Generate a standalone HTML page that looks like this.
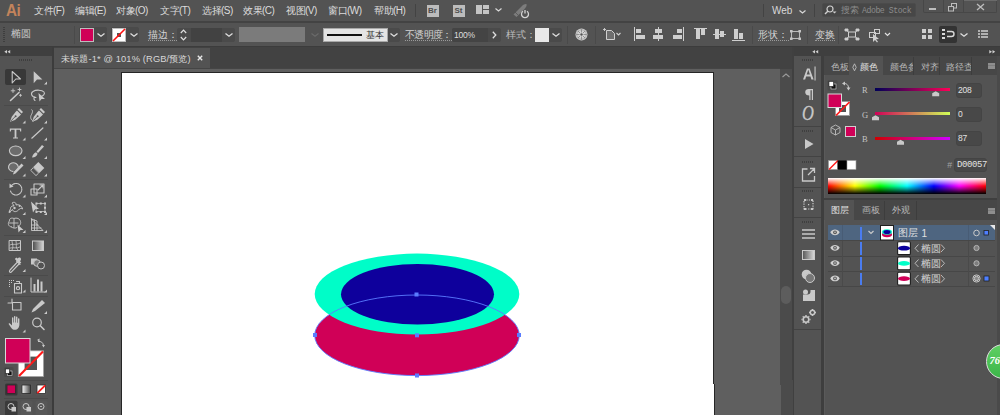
<!DOCTYPE html>
<html><head><meta charset="utf-8">
<style>
*{margin:0;padding:0;box-sizing:border-box}
html,body{width:1000px;height:415px;overflow:hidden}
body{background:#535353;position:relative;font-family:"Liberation Sans",sans-serif;color:#d9d9d9}
.a{position:absolute}
.t{position:absolute;white-space:nowrap;line-height:1}
svg{position:absolute;overflow:visible}
.mn{font-size:10px;top:6px;color:#dcdcdc;letter-spacing:-0.5px}
.cb{font-size:10px;color:#d4d4d4}
.ul{border-bottom:1px dotted #9a9a9a}
.sep{position:absolute;width:1px;background:#434343}
.grip{position:absolute;height:2px;background:repeating-linear-gradient(90deg,#3e3e3e 0 1px,transparent 1px 2px)}
</style></head><body>

<!-- ===== MENU BAR ===== -->
<div class="a" style="left:0;top:0;width:1000px;height:22px;background:#535353"></div>
<div class="a" style="left:0;top:21px;width:1000px;height:2px;background:#434343"></div>
<div class="t" style="left:6px;top:2.5px;font-size:16px;font-weight:bold;color:#c2835b;letter-spacing:-0.6px;transform:scaleX(0.95);transform-origin:left">Ai</div>
<div class="t mn" style="left:34px">文件(F)</div>
<div class="t mn" style="left:75px">编辑(E)</div>
<div class="t mn" style="left:116px">对象(O)</div>
<div class="t mn" style="left:160px">文字(T)</div>
<div class="t mn" style="left:202px">选择(S)</div>
<div class="t mn" style="left:243px">效果(C)</div>
<div class="t mn" style="left:286px">视图(V)</div>
<div class="t mn" style="left:328px">窗口(W)</div>
<div class="t mn" style="left:374px">帮助(H)</div>
<div class="sep" style="left:415px;top:4px;height:13px"></div>

<div class="a" style="left:427px;top:5px;width:12px;height:12px;background:#bcbcbc"></div>
<div class="t" style="left:428px;top:7px;font-size:8px;font-weight:bold;color:#4e4e4e">Br</div>
<div class="a" style="left:453px;top:5px;width:12px;height:12px;background:#bcbcbc"></div>
<div class="t" style="left:454.5px;top:7px;font-size:8px;font-weight:bold;color:#4e4e4e">St</div>
<div class="a" style="left:476px;top:5px;width:6px;height:9px;background:#c4c4c4"></div>
<div class="a" style="left:483px;top:5px;width:6px;height:4px;background:#c4c4c4"></div>
<div class="a" style="left:483px;top:10px;width:6px;height:4px;background:#c4c4c4"></div>
<svg style="left:495px;top:8px" width="7" height="4"><path d="M0.5 0.5L3.5 3L6.5 0.5" stroke="#d8d8d8" stroke-width="1.2" fill="none"/></svg>
<svg style="left:512px;top:3px" width="18" height="16"><path d="M1.5 11.5L9.5 3.5C11.5 1.5 13.5 0.8 14.5 1.2C15 2.2 14.2 4.3 12.3 6.2L4.5 14Z" fill="#7c7c7c"/><path d="M3 9L6 12" stroke="#535353" stroke-width="0.8"/><path d="M11 8.3A3.5 3.5 0 1 0 15 8.3" stroke="#d4d4d4" stroke-width="1.3" fill="none"/><path d="M13 7V10.5" stroke="#d4d4d4" stroke-width="1.3"/></svg>

<div class="sep" style="left:763px;top:4px;height:13px"></div>
<div class="t" style="left:772px;top:6px;font-size:10px;color:#d8d8d8">Web</div>
<svg style="left:799px;top:10px" width="7" height="4"><path d="M0.5 0.5L3.5 3L6.5 0.5" stroke="#d8d8d8" stroke-width="1.2" fill="none"/></svg>
<div class="sep" style="left:814px;top:4px;height:13px"></div>
<div class="a" style="left:822px;top:3px;width:94px;height:14px;background:#474747;border-radius:2px;border:1px solid #4b4b4b"></div>
<svg style="left:824px;top:5px" width="14" height="10"><circle cx="6" cy="4" r="3" stroke="#cfcfcf" stroke-width="1.2" fill="none"/><path d="M4 6L1 9" stroke="#cfcfcf" stroke-width="1.4"/><path d="M8.5 6.5h4l-2 2z" fill="#cfcfcf"/></svg>
<div class="t" style="left:841px;top:5.5px;font-size:8.5px;color:#8c8c8c">搜索</div><div class="t" style="left:862px;top:6.5px;font-size:8.2px;color:#8c8c8c;font-family:'Liberation Mono',monospace;letter-spacing:-0.45px">Adobe Stock</div>

<div class="a" style="left:923px;top:0;width:74px;height:13px;border:1px solid #474747;border-top:none;border-radius:0 0 2px 2px;background:#535353"></div>
<div class="a" style="left:943px;top:0;width:1px;height:13px;background:#474747"></div>
<div class="a" style="left:963px;top:0;width:1px;height:13px;background:#474747"></div>
<div class="a" style="left:964px;top:0;width:33px;height:1px;background:#6a6a6a"></div>
<div class="a" style="left:929px;top:8px;width:7px;height:2px;background:#bdbdbd"></div>
<svg style="left:948px;top:3px" width="10" height="9"><rect x="3.5" y="0.5" width="5" height="4.5" stroke="#bdbdbd" fill="none"/><rect x="0.5" y="3.5" width="5" height="4.5" stroke="#bdbdbd" fill="#535353"/></svg>
<svg style="left:976px;top:3px" width="9" height="8"><path d="M1 1L8 7M8 1L1 7" stroke="#bdbdbd" stroke-width="1.3"/></svg>

<!-- ===== CONTROL BAR ===== -->
<div class="a" style="left:0;top:46px;width:1000px;height:1px;background:#3c3c3c"></div>
<div class="grip" style="left:3px;top:27px;width:2px;height:16px;background:repeating-linear-gradient(180deg,#3e3e3e 0 1px,transparent 1px 2px)"></div>
<div class="t cb" style="left:11px;top:29px;color:#c8c8c8;font-size:9.5px">椭圆</div>
<div class="sep" style="left:74px;top:26px;height:18px;background:#4a4a4a"></div>


<!-- fill/stroke widgets -->
<div class="a" style="left:79px;top:27px;width:28px;height:15px;background:#4a4a4a;border-radius:2px"></div>
<div class="a" style="left:80px;top:28px;width:14px;height:14px;background:#d00057;border:1px solid #bdbdbd"></div>
<svg style="left:97px;top:33px" width="8" height="4"><path d="M0.5 0.5L4 3.2L7.5 0.5" stroke="#e0e0e0" stroke-width="1.3" fill="none"/></svg>
<div class="a" style="left:111px;top:27px;width:28px;height:15px;background:#4a4a4a;border-radius:2px"></div>
<div class="a" style="left:112px;top:28px;width:14px;height:14px;background:#fff;border:1px solid #bdbdbd"></div>
<div class="a" style="left:117px;top:33px;width:4px;height:4px;background:#555"></div>
<svg style="left:112px;top:28px" width="14" height="14"><path d="M1 13L13 1" stroke="#ff1010" stroke-width="1.6"/></svg>
<svg style="left:130px;top:33px" width="8" height="4"><path d="M0.5 0.5L4 3.2L7.5 0.5" stroke="#e0e0e0" stroke-width="1.3" fill="none"/></svg>

<div class="t cb ul" style="left:148px;top:30px;letter-spacing:0.2px">描边：</div>
<div class="a" style="left:177px;top:28px;width:58px;height:14px;background:#4a4a4a;border-radius:2px"></div>
<div class="a" style="left:191px;top:28px;width:31px;height:14px;background:#424242"></div>
<svg style="left:180px;top:29px" width="7" height="12"><path d="M0.8 4L3.5 1.2L6.2 4M0.8 8L3.5 10.8L6.2 8" stroke="#e0e0e0" stroke-width="1.2" fill="none"/></svg>
<svg style="left:225px;top:33px" width="8" height="4"><path d="M0.5 0.5L4 3.2L7.5 0.5" stroke="#e0e0e0" stroke-width="1.3" fill="none"/></svg>
<div class="a" style="left:239px;top:27px;width:66px;height:15px;background:#7b7b7b"></div>
<svg style="left:311px;top:33px" width="8" height="4"><path d="M0.5 0.5L4 3.2L7.5 0.5" stroke="#6a6a6a" stroke-width="1.2" fill="none"/></svg>

<div class="a" style="left:323px;top:28px;width:65px;height:14px;background:#e4e4e4;border:1px solid #a8a8a8"></div>
<div class="a" style="left:327px;top:34px;width:35px;height:2px;background:#111"></div>
<div class="t" style="left:366px;top:30.5px;font-size:9px;color:#333;letter-spacing:0.3px">基本</div>
<div class="a" style="left:388px;top:28px;width:12px;height:14px;background:#4a4a4a;border-radius:0 2px 2px 0"></div>
<svg style="left:390px;top:33px" width="8" height="4"><path d="M0.5 0.5L4 3.2L7.5 0.5" stroke="#e0e0e0" stroke-width="1.3" fill="none"/></svg>

<div class="t cb ul" style="left:405px;top:30px;letter-spacing:-0.7px">不透明度：</div>
<div class="a" style="left:452px;top:28px;width:49px;height:14px;background:#4a4a4a;border-radius:2px"></div>
<div class="a" style="left:452px;top:28px;width:36px;height:14px;background:#444;border-radius:2px 0 0 2px"></div>
<div class="t" style="left:454px;top:30.5px;font-size:8.5px;color:#dedede;letter-spacing:-0.2px">100%</div>
<svg style="left:492px;top:31px" width="5" height="8"><path d="M0.8 0.8L3.8 4L0.8 7.2" stroke="#e0e0e0" stroke-width="1.3" fill="none"/></svg>

<div class="t cb" style="left:506px;top:30px;letter-spacing:0.2px;color:#bdbdbd">样式：</div>
<div class="a" style="left:535px;top:28px;width:27px;height:14px;background:#4a4a4a;border-radius:2px"></div>
<div class="a" style="left:535px;top:28px;width:14px;height:14px;background:#e8e8e8"></div>
<svg style="left:552px;top:33px" width="8" height="4"><path d="M0.5 0.5L4 3.2L7.5 0.5" stroke="#e0e0e0" stroke-width="1.3" fill="none"/></svg>
<div class="sep" style="left:567px;top:26px;height:18px;background:#4a4a4a"></div>
<svg style="left:575px;top:28px" width="13" height="13"><circle cx="6.5" cy="6.5" r="6" fill="#d4d4d4"/><circle cx="6.5" cy="6.5" r="4.8" fill="none" stroke="#9a9a9a" stroke-width="0.7"/><path d="M6.5 1.2V4.5M6.5 8.5V11.8M1.2 6.5H4.5M8.5 6.5H11.8M2.8 2.8L5 5M8 8L10.2 10.2M10.2 2.8L8 5M5 8L2.8 10.2" stroke="#8a8a8a" stroke-width="0.9"/><circle cx="6.5" cy="6.5" r="1.2" fill="#555"/></svg>
<div class="sep" style="left:595px;top:26px;height:18px;background:#4a4a4a"></div>
<svg style="left:600px;top:26px" width="22" height="14"><path d="M6.5 4.5H11.5L14.5 7.5V13.5H6.5Z" stroke="#d0d0d0" stroke-width="1" fill="#6e6e6e"/><path d="M3 3.5H6M4.5 2V5" stroke="#d0d0d0" stroke-width="0.9"/><path d="M16.5 7L18.5 9L20.5 7" stroke="#d0d0d0" stroke-width="1.1" fill="none"/></svg>

<!-- align icons -->
<div class="a" style="left:634px;top:27px;width:1px;height:14px;background:#cfcfcf"></div>
<div class="a" style="left:636px;top:29px;width:5px;height:4px;background:#cfcfcf"></div>
<div class="a" style="left:636px;top:35px;width:9px;height:4px;background:#cfcfcf"></div>
<div class="a" style="left:658px;top:27px;width:1px;height:14px;background:#cfcfcf"></div>
<div class="a" style="left:655px;top:29px;width:7px;height:4px;background:#cfcfcf"></div>
<div class="a" style="left:653px;top:35px;width:10px;height:4px;background:#cfcfcf"></div>
<div class="a" style="left:683px;top:27px;width:1px;height:14px;background:#cfcfcf"></div>
<div class="a" style="left:677px;top:29px;width:5px;height:4px;background:#cfcfcf"></div>
<div class="a" style="left:673px;top:35px;width:9px;height:4px;background:#cfcfcf"></div>
<div class="a" style="left:694px;top:28px;width:13px;height:1px;background:#cfcfcf"></div>
<div class="a" style="left:696px;top:29px;width:4px;height:10px;background:#cfcfcf"></div>
<div class="a" style="left:701px;top:29px;width:4px;height:6px;background:#cfcfcf"></div>
<div class="a" style="left:713px;top:34px;width:13px;height:1px;background:#cfcfcf"></div>
<div class="a" style="left:715px;top:29px;width:4px;height:10px;background:#cfcfcf"></div>
<div class="a" style="left:720px;top:31px;width:4px;height:6px;background:#cfcfcf"></div>
<div class="a" style="left:732px;top:40px;width:13px;height:1px;background:#cfcfcf"></div>
<div class="a" style="left:734px;top:29px;width:4px;height:10px;background:#cfcfcf"></div>
<div class="a" style="left:739px;top:33px;width:4px;height:6px;background:#cfcfcf"></div>
<div class="sep" style="left:752px;top:26px;height:18px;background:#4a4a4a"></div>

<div class="t cb ul" style="left:758px;top:30px;letter-spacing:0.2px">形状：</div>
<svg style="left:790px;top:30px" width="11" height="10"><rect x="1.5" y="1.5" width="8" height="7" stroke="#c4c4c4" stroke-width="0.9" fill="none"/><path d="M0 0h2.6v2.6h-2.6zM8.4 0h2.6v2.6h-2.6zM0 7.4h2.6v2.6h-2.6zM8.4 7.4h2.6v2.6h-2.6z" fill="#c4c4c4"/></svg>
<div class="sep" style="left:807px;top:26px;height:18px;background:#4a4a4a"></div>
<div class="t cb ul" style="left:815px;top:30px">变换</div>
<div class="sep" style="left:838px;top:26px;height:18px;background:#4a4a4a"></div>
<svg style="left:845px;top:29px" width="14" height="11"><rect x="3.5" y="3" width="7" height="5" stroke="#cfcfcf" stroke-width="1" fill="none"/><path d="M0 0h3v2h-3zM11 0h3v2h-3zM0 9h3v2h-3zM11 9h3v2h-3zM1 1L4 3.5M13 1L10 3.5M1 10L4 7.5M13 10L10 7.5" fill="#cfcfcf" stroke="#cfcfcf" stroke-width="0.9"/></svg>
<svg style="left:867px;top:28px" width="26" height="14"><rect x="2.5" y="4.5" width="6" height="5" stroke="#cfcfcf" stroke-width="1" fill="none"/><rect x="7.5" y="1.5" width="5" height="4" stroke="#cfcfcf" stroke-width="1" fill="none"/><path d="M6 6L6 14L8 12L10 14.5L11 13.8L9 11.3L12 11Z" fill="#cfcfcf"/><path d="M18 5L20.5 7.5L23 5" stroke="#e0e0e0" stroke-width="1.2" fill="none"/></svg>
<svg style="left:922px;top:29px" width="12" height="12"><path d="M0 0h4v4h-4zM6 0h4v4h-4zM0 6h4v4h-4zM6 6h4v4h-4z" fill="#cfcfcf"/><path d="M5 0V11M0 5H11" stroke="#535353" stroke-width="1"/></svg>
<div class="a" style="left:939px;top:26px;width:18px;height:17px;background:#333;border-radius:2px"></div>
<svg style="left:942px;top:29px" width="12" height="11"><path d="M0 0h3v2h-3zM0 4h3v2h-3zM0 8h3v2h-3z" fill="#d8d8d8"/><path d="M5 2.5H9.5A2.5 2.5 0 0 1 9.5 7.5H5" stroke="#d8d8d8" stroke-width="1.4" fill="none"/></svg>
<svg style="left:960px;top:33px" width="8" height="4"><path d="M0.5 0.5L4 3.2L7.5 0.5" stroke="#e0e0e0" stroke-width="1.3" fill="none"/></svg>
<svg style="left:978px;top:30px" width="10" height="9"><path d="M0 1h2M3 1h7M0 4h2M3 4h7M0 7h2M3 7h7" stroke="#cfcfcf" stroke-width="1.3"/></svg>


<!-- ===== LEFT TOOLBAR ===== -->
<div class="a" style="left:0;top:47px;width:52px;height:9px;background:#3f3f3f"></div>
<svg style="left:4px;top:50px" width="7" height="4"><path d="M3 0L0.3 1.8L3 3.6ZM6.2 0L3.5 1.8L6.2 3.6Z" fill="#cfcfcf"/></svg>
<div class="a" style="left:52px;top:47px;width:2px;height:368px;background:#3c3c3c"></div>
<div class="grip" style="left:19px;top:59px;width:14px"></div>
<div class="a" style="left:5px;top:69px;width:21px;height:16px;background:#383838;border-radius:2px"></div>
<svg style="left:0;top:0" width="52" height="415">
<g fill="none" stroke="#c9c9c9" stroke-width="1">
 <path d="M4 105.5H48M4 179.5H48M4 235.5H48M4 275.5H48M4 296.5H48M4 380.5H48M4 398.5H48" stroke="#4a4a4a"/>
</g>
<g fill="#c9c9c9">
 <!-- mini triangles -->
 <path d="M47 81.5V84.5H44Z M25.5 120.5V123.5H22.5Z M47 120.5V123.5H44Z M25.5 137.5V140.5H22.5Z M47 137.5V140.5H44Z M25.5 156V159H22.5Z M47 156V159H44Z M25.5 173.5V176.5H22.5Z M47 173.5V176.5H44Z M25.5 194.5V197.5H22.5Z M47 194.5V197.5H44Z M25.5 212V215H22.5Z M47 212V215H44Z M25.5 230V233H22.5Z M47 230V233H44Z M25.5 269V272H22.5Z M25.5 289.5V292.5H22.5Z M47 289.5V292.5H44Z M47 311V314H44Z M25.5 329.5V332.5H22.5Z"/>
</g>
<g fill="none" stroke="#c9c9c9" stroke-width="1.1" stroke-linejoin="round" stroke-linecap="round">
 <!-- select -->
 <path d="M12.2 71.5L20.5 79H15.8L12.2 83Z"/>
 <!-- magic wand -->
 <path d="M10.5 100.5L19 92.5" stroke-width="1.6"/>
 <path d="M13 89v3.5M11.2 90.8h3.6M19.5 88v3M18 89.5h3M20.5 94.3v2M19.5 95.3h2" stroke-width="0.9"/>
 <!-- lasso -->
 <path d="M36 97.5C31 97 30.5 93 33 91.5C36 89.5 42 89.8 44 92C45.5 94 43 96 40.5 96.5M34.5 97C33.5 98.5 34 100 35 100.5"/>
 <!-- pen -->
 <!-- ellipse -->
 <ellipse cx="15.7" cy="150.8" rx="6.3" ry="4.8" fill="#6c6c6c"/>
 <!-- shaper -->
 <path d="M13 171.5C9.5 171 8 168.5 8.7 166C9.5 163 13.5 162 16 163.5C17.5 164.5 18.3 166 18.3 167" fill="#6c6c6c"/>
 <!-- rotate -->
 <path d="M11.6 185.5A5.8 5.8 0 1 1 10.5 191" stroke-dasharray="1.4 0.8"/>
 <!-- scale -->
 <rect x="34" y="184" width="10" height="9"/><rect x="31" y="189" width="6" height="6"/><path d="M38 190L43 185M40 185H43V188"/>
 <!-- free transform dotted rect -->
 <rect x="36.5" y="203.5" width="8.5" height="8" stroke-width="0.8"/>
 <!-- shape builder -->
 <path d="M11.5 227C8 226.5 7.5 223 9.5 221C9 218.5 11.5 217.5 14 218.5C16.5 217.5 20 218.5 20.5 221.5C21 223 20.5 224.5 19.5 225.5M11.5 227C13 228.5 16 228.5 17 227.5M9.5 223H18M14 219V227.5" stroke-width="0.9"/>
 <!-- perspective grid -->
 <path d="M31.5 219V230.5H43L31.5 219ZM31.5 219L37 221V230.5M31.5 225H38M31.5 228H41M34.5 220V230.5" stroke-width="0.9"/>
 <!-- mesh -->
 <rect x="9.5" y="240.5" width="11" height="10" stroke-width="1"/><path d="M10 245C13 243 15 246 20 243M12 241C12 244 14 246 12 250M16 241C17 245 15 247 18 250M10 248C13 247 17 249 20 247" stroke-width="0.8"/>
 <!-- eyedropper -->
 <path d="M10 270L17 262.5M10 270L9.5 271C9.2 272 10 272.7 11 272.3L18.5 264.5M16.5 261L20 264.5" stroke-width="1.1"/>
 <!-- symbol sprayer -->
 <rect x="14.5" y="283.5" width="7" height="9.5"/><circle cx="18" cy="288.2" r="1.6"/><path d="M16.5 281.5H19.5V283.5"/>
 <!-- graph -->
 <path d="M31 278V292H45" stroke-width="1"/>
 <!-- artboard -->
 <rect x="12.5" y="302.5" width="8.5" height="7.5"/><path d="M8 303H12.5M12 299V302.5"/>
 <!-- zoom -->
 <circle cx="37" cy="322.5" r="4.3" stroke-width="1.2"/><path d="M40.3 325.8L44 329.5" stroke-width="1.6"/>
</g>
<g fill="#c9c9c9">
 <!-- direct select -->
 <path d="M33.7 71.2L42.4 79.4H37L33.7 83.3Z"/>
 <!-- lasso arrow -->
 <path d="M38.5 93L45 99H41.5L39.5 101.5Z"/>
 <!-- pen -->
 <path d="M17 110.5L21 114.5L19.5 116L15 120L10 121.8L11.8 116.8L15.5 112Z"/><path d="M17.5 109.5l1.5-1.5 4 4-1.5 1.5z"/>
 <!-- curvature pen -->
 <path d="M39 110.5L43 114.5L41.5 116L37 120L32 121.8L33.8 116.8L37.5 112Z"/><path d="M39.5 109.5l1.5-1.5 4 4-1.5 1.5z"/>
 <!-- T -->
 <path d="M9.8 128.5H21.2V131.5H20.2L19.8 129.8H16.4V137.4H18V138.5H13V137.4H14.6V129.8H11.2L10.8 131.5H9.8Z"/>
 <!-- brush -->
 <path d="M42 145L44 146.5L38 153L36.5 151.5Z"/><path d="M36 152.2L37.6 153.8C37 156 35 157.5 32 157.5C32.5 155 34 152.8 36 152.2Z"/>
 <!-- shaper pencil -->
 <path d="M21.5 163.5L23.5 165.5L15.5 173.5L13 174.5L13.8 171.8Z"/>
 <!-- eraser -->
 <path d="M38.3 162L44.3 168L39.3 173L33.3 167Z"/><path d="M33.3 167.6L38.7 173L36 175.6L30.7 170.3Z" fill="none" stroke="#c9c9c9" stroke-width="0.9"/>
 <!-- rotate arrow head -->
 <path d="M9.5 183.5L13.5 186.5L9.5 188Z"/>
 <!-- puppet warp -->
 <path d="M12 203C14 201.5 16.5 202.5 16 205C19 204 22 206 22.5 209C21 208 19.5 208.5 18.5 210C16 212.5 13 212 12.5 209.5C11.5 210.5 10 211.5 9 212.5L10.5 208.5C10.5 206.5 12.5 205.5 14 206C13.5 204.5 12.5 204 12 203Z" fill="none" stroke="#c9c9c9" stroke-width="1"/><circle cx="14.5" cy="208" r="1.2"/><circle cx="9.8" cy="211.8" r="1"/><circle cx="19.5" cy="206" r="0.9"/>
 <!-- free transform arrow -->
 <path d="M35.5 202.5h2v2h-2zM44 202.5h2v2h-2zM44 211h2v2h-2zM35.5 211h2v2h-2zM39.8 211h2v2h-2zM44 206.8h2v2h-2zM39.8 202.5h2v2h-2z"/><path d="M31 201.5L39 209H35.3L33 212.5Z"/>
 <!-- shape builder arrow -->
 <path d="M17.5 224.5L23.5 230H20.5L18.5 232.5Z"/>
 <!-- eyedropper bulb -->
 <path d="M17.5 258.5C19 257 21 257.5 21 259.3C21 260.2 20.5 260.8 20 261.3L21.3 262.6L19.8 264L14.8 259L16.3 257.6Z"/>
 <!-- blend -->
 <path d="M31 258.5h6v6h-6z"/>
 <!-- graph bars -->
 <path d="M33.5 284h2v7.5h-2zM37 279.5h2v12h-2zM40.5 281.5h2v10h-2z"/>
 <!-- sprayer dots -->
 <path d="M9 280h1v1h-1zM11 280h1v1h-1zM13 280h1v1h-1zM9 282h1v1h-1zM11 282h1v1h-1zM9 284h1v1h-1zM9 286h1v1h-1z"/>
 <!-- slice knife -->
 <path d="M42 300L45 303L35 311L31.5 312.5L33 309Z"/>
 <!-- hand -->
 <path d="M12 325.5V317.8C12 317 13.4 317 13.4 317.8V322.5H14V316.5C14 315.7 15.4 315.7 15.4 316.5V322.5H16V317C16 316.2 17.4 316.2 17.4 317V322.8H18V318.8C18 318 19.4 318 19.4 318.8V324.5C19.4 327.5 17.5 329.8 14.8 329.8C13 329.8 12 329 11 327.5L8.8 324.3C8.3 323.5 9.3 322.8 10 323.4Z"/>
</g>
<g fill="none" stroke="#c9c9c9" stroke-width="1">
 <circle cx="37" cy="263" r="3.3" fill="#777"/><circle cx="41" cy="265.5" r="3.5" fill="#535353"/>
 <rect x="32.5" y="241" width="11" height="9.5" fill="url(#gr)"/>
</g>
<defs><linearGradient id="gr"><stop offset="0" stop-color="#4a4a4a"/><stop offset="1" stop-color="#d8d8d8"/></linearGradient>
<linearGradient id="gr2"><stop offset="0" stop-color="#fafafa"/><stop offset="1" stop-color="#444"/></linearGradient></defs>
<path d="M31.8 138.2L42.9 128" stroke="#c9c9c9" stroke-width="1.2" stroke-linecap="round"/>
<path d="M10.8 121L15.2 116.6M32.8 121L37.2 116.6" stroke="#535353" stroke-width="0.9"/>
<circle cx="15.6" cy="116.2" r="1" fill="#535353"/><circle cx="37.6" cy="116.2" r="1" fill="#535353"/>
<path d="M31.5 109.5C33.5 111 32 113.5 31 115.5C30 118 31.5 121 34 121" stroke="#c9c9c9" stroke-width="0.9" fill="none"/>
<!-- fill / stroke -->
<rect x="18.3" y="350.8" width="25.2" height="25.8" fill="#fff" stroke="#a0a0a0" stroke-width="0.8"/>
<rect x="24.6" y="356.6" width="12.4" height="13.4" fill="#535353"/>
<path d="M19 376L43 351.5" stroke="#ff1a1a" stroke-width="2.1"/>
<rect x="5.5" y="338.5" width="24.5" height="24.5" fill="#d00057" stroke="#d8d8d8"/>
<path d="M38 341.5C41 341 43 342.5 43.5 345.5" stroke="#c9c9c9" fill="none" stroke-width="1"/><path d="M37 340l2.5-1.5v3z M42 345l3 0-1.5 2.5z" fill="#c9c9c9"/>
<rect x="4" y="367" width="9.5" height="10" rx="1.5" fill="#4b4b4b"/><rect x="7.5" y="371" width="4.5" height="4.5" fill="#111" stroke="#ddd" stroke-width="0.6"/><rect x="5.6" y="369" width="3.8" height="4.3" fill="#fff" stroke="#222" stroke-width="0.6"/>
<rect x="20.5" y="383.5" width="12" height="12" rx="1.5" fill="#575757"/><rect x="35.5" y="383.5" width="12" height="12" rx="1.5" fill="#575757"/><rect x="5" y="383.5" width="12.5" height="12" rx="1.5" fill="#3a3a3a"/><rect x="7" y="385" width="8.5" height="8.5" fill="#d00057" stroke="#2a2a2a" stroke-width="0.8"/>
<rect x="22" y="385" width="8.5" height="8.5" fill="url(#gr2)" stroke="#2a2a2a" stroke-width="0.8"/>
<rect x="37" y="385" width="8.5" height="8.5" fill="#fff" stroke="#2a2a2a" stroke-width="0.8"/><path d="M37.3 393.2L45.2 385.3" stroke="#ff1a1a" stroke-width="1.8"/>
<!-- draw modes -->
<rect x="5" y="400.7" width="12.5" height="16" rx="1.5" fill="#3a3a3a"/>
<rect x="20.5" y="400.7" width="12" height="16" rx="1.5" fill="#575757"/><rect x="35.5" y="400.7" width="12" height="16" rx="1.5" fill="#575757"/>
<g fill="none" stroke="#c9c9c9" stroke-width="1">
<circle cx="11" cy="406.5" r="3"/><circle cx="26" cy="406.5" r="3"/><circle cx="41" cy="406.5" r="3"/><path d="M40 406.5h2" stroke-width="0.8"/>
</g>
<path d="M11.5 407h4.5v4.5h-4.5zM26.5 407h4.5v4.5h-4.5z" fill="#c9c9c9"/>
</svg>

<!-- ===== DOC TAB BAR ===== -->
<div class="a" style="left:54px;top:47px;width:739px;height:22px;background:#424242"></div>
<div class="a" style="left:54px;top:48px;width:156px;height:21px;background:#535353"></div>
<div class="t" style="left:61px;top:54.5px;font-size:9.3px;color:#d8d8d8;letter-spacing:0.14px">未标题-1* @ 101% (RGB/预览)</div>
<svg style="left:197px;top:55px" width="6" height="6"><path d="M0.8 0.8L5.2 5.2M5.2 0.8L0.8 5.2" stroke="#e8e8e8" stroke-width="1.4"/></svg>

<!-- ===== CANVAS ===== -->
<div class="a" style="left:54px;top:69px;width:726px;height:346px;background:#5f5f5f"></div>
<div class="a" style="left:54px;top:68px;width:726px;height:1px;background:#454545"></div>
<div class="a" style="left:121px;top:72px;width:593px;height:350px;background:#ffffff;border:1px solid #262626"></div>
<div class="a" style="left:780px;top:69px;width:12px;height:346px;background:#4b4b4b"></div>
<svg style="left:782px;top:73px" width="8" height="5"><path d="M0.5 4L4 1L7.5 4" stroke="#9a9a9a" stroke-width="1.1" fill="none"/></svg>
<div class="a" style="left:781px;top:286px;width:10px;height:18px;background:#5d5d5d;border-radius:5px"></div>
<div class="a" style="left:792px;top:47px;width:2px;height:368px;background:#404040"></div>

<!-- ellipses -->
<svg style="left:0;top:0" width="1000" height="415">
  <ellipse cx="417" cy="335.3" rx="102.3" ry="40.3" fill="#d00057"/>
  <ellipse cx="417" cy="294.1" rx="102.3" ry="40.5" fill="#00fdc8"/>
  <ellipse cx="417.5" cy="294.3" rx="76.5" ry="30.3" fill="#0e009c"/>
  <ellipse cx="417" cy="335.3" rx="102.3" ry="40.3" fill="none" stroke="#5a7cff" stroke-width="0.9"/>
  <rect x="414.5" y="292.5" width="4" height="4" fill="#5a7cff"/>
  <rect x="313" y="333" width="4" height="4" fill="#5a7cff"/>
  <rect x="517" y="333" width="4" height="4" fill="#5a7cff"/>
  <rect x="415" y="333.3" width="4" height="4" fill="#5a7cff"/>
  <rect x="415" y="373.5" width="4" height="4" fill="#5a7cff"/>
</svg>

<!-- seam shift artifact -->
<div class="a" style="left:713px;top:384px;width:1px;height:31px;background:#fff"></div>
<div class="a" style="left:714px;top:384px;width:1px;height:31px;background:#262626"></div>
<div class="a" style="left:780px;top:385px;width:1px;height:30px;background:#5f5f5f"></div>
<div class="a" style="left:792px;top:380px;width:1px;height:35px;background:#4b4b4b"></div>
<div class="a" style="left:794px;top:380px;width:1px;height:35px;background:#404040"></div>
<!-- ===== RIGHT ICON COLUMN ===== -->
<div class="a" style="left:794px;top:47px;width:206px;height:9px;background:#3f3f3f"></div>
<svg style="left:811.5px;top:50px" width="7" height="4"><path d="M3 0L0.3 1.8L3 3.6ZM6.2 0L3.5 1.8L6.2 3.6Z" fill="#cfcfcf"/></svg>
<svg style="left:989px;top:50px" width="7" height="4"><path d="M0.3 0L3 1.8L0.3 3.6ZM3.5 0L6.2 1.8L3.5 3.6Z" fill="#cfcfcf"/></svg>
<div class="a" style="left:794px;top:56px;width:28px;height:359px;background:#535353"></div>
<div class="a" style="left:821px;top:56px;width:3px;height:359px;background:#3e3e3e"></div>
<svg style="left:794px;top:0" width="28" height="415">
<g fill="#3f3f3f">
 <path d="M8 59h1v2h-1zM10 59h1v2h-1zM12 59h1v2h-1zM14 59h1v2h-1zM16 59h1v2h-1zM18 59h1v2h-1z"/>
 <path d="M8 130h1v2h-1zM10 130h1v2h-1zM12 130h1v2h-1zM14 130h1v2h-1zM16 130h1v2h-1zM18 130h1v2h-1z"/>
 <path d="M8 161h1v2h-1zM10 161h1v2h-1zM12 161h1v2h-1zM14 161h1v2h-1zM16 161h1v2h-1zM18 161h1v2h-1z"/>
 <path d="M8 190h1v2h-1zM10 190h1v2h-1zM12 190h1v2h-1zM14 190h1v2h-1zM16 190h1v2h-1zM18 190h1v2h-1z"/>
 <path d="M8 221h1v2h-1zM10 221h1v2h-1zM12 221h1v2h-1zM14 221h1v2h-1zM16 221h1v2h-1zM18 221h1v2h-1z"/>
</g>
<path d="M0 126.5H27M0 156.5H27M0 187.5H27M0 217.5H27M0 329.5H27" stroke="#434343" stroke-width="1.2"/>
<g fill="#c9c9c9">
 <!-- A| -->
 <path d="M9 79.5L13 68.5H15.6L19.6 79.5H17.4L16.5 76.6H12.1L11.2 79.5ZM12.7 74.6H15.9L14.3 69.8Z"/>
 <path d="M20.5 66.5h1.1v14h-1.1z"/>
 <!-- pilcrow -->
 <path d="M14.5 89H19V100H17.8V90.2H16.5V100H15.3V95.5C12.8 95.5 11.2 94.2 11.2 92.2C11.2 90.2 12.8 89 14.5 89Z"/>
 <!-- play -->
 <path d="M11 139V149L19.5 144Z"/>
 <!-- symbols -->
 <circle cx="11.5" cy="292" r="2.5"/><path d="M9 294.5h4.5A3 3 0 0 0 16.5 291.5V290H21V301H9Z"/>
</g>
<g fill="none" stroke="#c9c9c9" stroke-width="1.2">
 <!-- O italic -->
 
 <!-- export -->
 <path d="M13.5 169H8.5V181H20.5V176M14 175L20.5 168.5M16 168.5H20.5V173" stroke-width="1.3"/>
 <!-- transform dotted -->
 <rect x="10" y="200" width="9" height="9" stroke-dasharray="1.3 1.1"/>
 <!-- lines -->
 <path d="M8 230H21M8 234H21M8 238H21" stroke-width="1.5"/>
 <!-- gear -->
 <circle cx="12" cy="319.5" r="2.8" stroke-width="1.6"/><circle cx="18.5" cy="312.5" r="2.2" stroke-width="1.4"/>
 <path d="M12 315V316M12 323V324M7.5 319.5H8.5M15.5 319.5H16.5M8.8 316.3L9.5 317M14.5 322L15.2 322.7M8.8 322.7L9.5 322M14.5 317L15.2 316.3M18.5 309V310M18.5 315V316M15 312.5H16M21 312.5H22" stroke-width="1.4"/>
</g>
<path d="M14 204h1.2v1.2h-1.2z" fill="#c9c9c9"/>
<path d="M10 199h2v2h-2zM17 199h2v2h-2zM10 208h2v2h-2zM17 208h2v2h-2z" fill="#c9c9c9"/>
<!-- gradient icon -->
<defs><linearGradient id="g3"><stop offset="0" stop-color="#555"/><stop offset="1" stop-color="#dcdcdc"/></linearGradient></defs>
<rect x="8.5" y="250.5" width="12" height="9" fill="url(#g3)" stroke="#c9c9c9"/>
<!-- transparency -->
<circle cx="12.5" cy="274.5" r="4.8" fill="#c9c9c9"/><circle cx="16" cy="278" r="4.5" fill="#777" stroke="#c9c9c9" stroke-width="1"/>
</svg>

<div class="t" style="left:802px;top:103px;font-size:20px;font-style:italic;font-family:'Liberation Serif',serif;color:#c9c9c9;-webkit-text-stroke:0.3px #c9c9c9;transform:scaleX(0.82);transform-origin:left">O</div>
<!-- ===== COLOR PANEL ===== -->
<div class="a" style="left:824px;top:56px;width:173px;height:19px;background:#474747"></div>
<div class="a" style="left:849px;top:56px;width:34px;height:20px;background:#535353"></div>
<div class="a" style="left:913px;top:57px;width:1px;height:18px;background:#3d3d3d"></div>
<div class="a" style="left:939px;top:57px;width:1px;height:18px;background:#3d3d3d"></div>
<div class="a" style="left:971px;top:57px;width:1px;height:18px;background:#3d3d3d"></div>
<div class="t" style="left:831px;top:62.5px;font-size:9px;color:#b8b8b8">色板</div>
<svg style="left:851.5px;top:62.5px" width="5" height="9"><path d="M2.5 0.8L4.2 4.3L2.5 7.8L0.8 4.3Z" stroke="#c0c0c0" fill="none" stroke-width="0.9"/></svg>
<div class="t" style="left:860px;top:62.5px;font-size:9px;color:#e0e0e0">颜色</div>
<div class="a" style="left:890px;top:61px;width:23px;height:12px;overflow:hidden"><div class="t" style="left:0;top:1.5px;font-size:9px;color:#b8b8b8">颜色参</div></div>
<div class="t" style="left:921px;top:62.5px;font-size:9px;color:#b8b8b8">对齐</div>
<div class="a" style="left:946px;top:61px;width:25px;height:12px;overflow:hidden"><div class="t" style="left:0;top:1.5px;font-size:9px;color:#b8b8b8">路径查找器</div></div>
<div class="a" style="left:987.5px;top:63px;width:7.5px;height:6px;background:#8e8e8e;border-top:2.7px solid #8e8e8e;box-shadow:inset 0 0.5px 0 #6e6e6e"></div>
<div class="a" style="left:824px;top:75px;width:173px;height:123px;background:#535353"></div>
<div class="a" style="left:824px;top:198px;width:176px;height:2px;background:#3f3f3f"></div>
<div class="a" style="left:997px;top:56px;width:3px;height:359px;background:#4a4a4a"></div>

<svg style="left:824px;top:75px" width="176" height="123">
 <!-- default fill/stroke icon -->
 <rect x="3.5" y="5" width="10" height="10.5" rx="1.5" fill="#4b4b4b"/>
 <rect x="7" y="9" width="5" height="5" fill="#111" stroke="#ddd" stroke-width="0.6"/>
 <rect x="5" y="6.5" width="4.5" height="4.8" fill="#fff" stroke="#222" stroke-width="0.6"/>
 <!-- swap -->
 <path d="M19 8.5C22.5 8 24.5 10 24.5 13" stroke="#c9c9c9" fill="none" stroke-width="1"/><path d="M18 8.5l3-2v4z M22.5 12.5h4l-2 3z" fill="#c9c9c9"/>
 <!-- stroke swatch -->
 <rect x="11.5" y="26.5" width="14" height="14" fill="#fff" stroke="#9a9a9a"/>
 <rect x="15" y="30" width="7" height="7" fill="#535353"/>
 <path d="M12 40.5L25.5 27" stroke="#ff1a1a" stroke-width="1.7"/>
 <!-- fill swatch -->
 <rect x="4" y="19" width="13.5" height="13.5" fill="#d00057" stroke="#d8d8d8" stroke-width="1"/>
 <!-- cube -->
 <path d="M11.5 50L16 52.5V57.5L11.5 60L7 57.5V52.5Z M7 52.5L11.5 55L16 52.5M11.5 55V60" stroke="#bdbdbd" fill="none" stroke-width="0.9"/>
 <!-- small swatch -->
 <rect x="21.5" y="51.5" width="10" height="10" fill="#d00057" stroke="#cfcfcf"/>
 <!-- none/black/white -->
 <rect x="4.5" y="85.5" width="9.5" height="9" fill="#fff" stroke="#999" stroke-width="0.6"/>
 <path d="M5 94.5L14 85.5" stroke="#ff1a1a" stroke-width="1.4"/>
 <rect x="13.5" y="85.5" width="9.5" height="9" fill="#000"/>
 <rect x="23" y="85.5" width="9" height="9" fill="#fff" stroke="#999" stroke-width="0.6"/>
</svg>
<div class="t" style="left:862px;top:86px;font-size:8.5px;font-family:'Liberation Serif',serif;color:#c4c4c4">R</div>
<div class="t" style="left:862px;top:110.5px;font-size:8.5px;font-family:'Liberation Serif',serif;color:#c4c4c4">G</div>
<div class="t" style="left:862px;top:134.5px;font-size:8.5px;font-family:'Liberation Serif',serif;color:#c4c4c4">B</div>
<div class="a" style="left:875px;top:88px;width:75px;height:3px;background:linear-gradient(90deg,#000057,#ff0057)"></div>
<div class="a" style="left:875px;top:112px;width:75px;height:3px;background:linear-gradient(90deg,#d00057,#d0ff57)"></div>
<div class="a" style="left:875px;top:136.5px;width:75px;height:3px;background:linear-gradient(90deg,#d00000,#d000ff)"></div>
<svg style="left:0;top:0" width="1000" height="415">
 <path d="M932.2 96.2V93.2L935.7 91.2L939.2 93.2V96.2Z" fill="#c9c9c9"/>
 <path d="M872 120.2V117.2L875.5 115.2L879 117.2V120.2Z" fill="#c9c9c9"/>
 <path d="M897 144.7V141.7L900.5 139.7L904 141.7V144.7Z" fill="#c9c9c9"/>
</svg>
<div class="a" style="left:955.5px;top:83px;width:26px;height:14.5px;background:#484848;border:1px solid #444;border-radius:3px"></div>
<div class="a" style="left:955.5px;top:107px;width:26px;height:14.5px;background:#484848;border:1px solid #444;border-radius:3px"></div>
<div class="a" style="left:955.5px;top:131px;width:26px;height:14.5px;background:#484848;border:1px solid #444;border-radius:3px"></div>
<div class="a" style="left:954px;top:157.5px;width:33px;height:14.5px;background:#484848;border:1px solid #444;border-radius:3px"></div>
<div class="t" style="left:958px;top:85.5px;font-size:8.5px;color:#e2e2e2;letter-spacing:-0.2px">208</div>
<div class="t" style="left:958px;top:109.5px;font-size:8.5px;color:#e2e2e2">0</div>
<div class="t" style="left:958px;top:133.5px;font-size:8.5px;color:#e2e2e2;letter-spacing:-0.2px">87</div>
<div class="t" style="left:947px;top:162px;font-size:9px;font-family:'Liberation Mono',monospace;color:#a0a0a0">#</div>
<div class="t" style="left:957px;top:160.5px;font-size:9px;font-family:'Liberation Mono',monospace;color:#e2e2e2;letter-spacing:-0.4px">D00057</div>
<div class="a" style="left:828px;top:178px;width:158px;height:15.5px;background:linear-gradient(180deg,rgba(255,255,255,1) 0%,rgba(255,255,255,0) 50%),linear-gradient(180deg,rgba(0,0,0,0) 50%,rgba(0,0,0,1) 100%),linear-gradient(90deg,#f00 0%,#ff0 17%,#0f0 33%,#0ff 50%,#00f 67%,#f0f 83%,#f00 100%)"></div>


<!-- ===== LAYERS PANEL ===== -->
<div class="a" style="left:824px;top:200px;width:173px;height:20px;background:#474747"></div>
<div class="a" style="left:824px;top:200px;width:30px;height:21px;background:#535353"></div>
<div class="a" style="left:884px;top:201px;width:1px;height:19px;background:#3d3d3d"></div>
<div class="a" style="left:916px;top:201px;width:1px;height:19px;background:#3d3d3d"></div>
<div class="t" style="left:831px;top:206px;font-size:9.2px;color:#e0e0e0">图层</div>
<div class="t" style="left:862px;top:206px;font-size:9.2px;color:#b8b8b8">画板</div>
<div class="t" style="left:892px;top:206px;font-size:9.2px;color:#b8b8b8">外观</div>
<div class="a" style="left:987.5px;top:208px;width:7.5px;height:5.5px;background:#8e8e8e;border-top:2.5px solid #8e8e8e;box-shadow:inset 0 0.5px 0 #6e6e6e"></div>
<div class="a" style="left:824px;top:220px;width:173px;height:195px;background:#535353"></div>

<div class="a" style="left:828px;top:225px;width:167px;height:15px;background:#4e6580"></div>
<div class="a" style="left:828px;top:240px;width:167px;height:1px;background:#474747"></div>
<div class="a" style="left:828px;top:255.5px;width:167px;height:1px;background:#474747"></div>
<div class="a" style="left:828px;top:270.5px;width:167px;height:1px;background:#474747"></div>
<div class="a" style="left:828px;top:286px;width:167px;height:1px;background:#474747"></div>
<div class="a" style="left:842px;top:241px;width:1px;height:45px;background:#4a4a4a"></div>
<div class="a" style="left:968px;top:241px;width:1px;height:45px;background:#4a4a4a"></div>
<div class="a" style="left:842px;top:225px;width:1px;height:15px;background:#485c75"></div>
<div class="a" style="left:968px;top:225px;width:1px;height:15px;background:#485c75"></div>
<div class="a" style="left:859.5px;top:226.5px;width:2.2px;height:13px;background:#4a7cf0"></div>
<div class="a" style="left:859.5px;top:242px;width:2.2px;height:12.5px;background:#4a7cf0"></div>
<div class="a" style="left:859.5px;top:257px;width:2.2px;height:12.5px;background:#4a7cf0"></div>
<div class="a" style="left:859.5px;top:272.5px;width:2.2px;height:12.5px;background:#4a7cf0"></div>
<svg style="left:0;top:0" width="1000" height="415">
 <g fill="none" stroke="#c9c9c9" stroke-width="1">

  <path d="M868.5 231L871 233.5L873.5 231" stroke-width="1.2"/>
  <circle cx="976.5" cy="233" r="2.8"/>
  <circle cx="976.5" cy="248" r="2.6" fill="#7e7e7e" stroke="#b4b4b4" stroke-width="1"/>
  <circle cx="976.5" cy="263.3" r="2.6" fill="#7e7e7e" stroke="#b4b4b4" stroke-width="1"/>
  <circle cx="976.5" cy="278.5" r="3.6"/>
  <circle cx="976.5" cy="278.5" r="2.2" fill="#8a8a8a"/>
 </g>
 <path d="M830.3 232.3C832.3 228.5 837.7 228.5 839.7 232.3C837.7 236.1 832.3 236.1 830.3 232.3Z" fill="#d0d0d0"/><circle cx="835" cy="232.3" r="1.9" fill="#5a5a5a"/><circle cx="835" cy="232.3" r="0.8" fill="#d0d0d0"/><path d="M830.3 247.8C832.3 244.0 837.7 244.0 839.7 247.8C837.7 251.6 832.3 251.6 830.3 247.8Z" fill="#d0d0d0"/><circle cx="835" cy="247.8" r="1.9" fill="#5a5a5a"/><circle cx="835" cy="247.8" r="0.8" fill="#d0d0d0"/><path d="M830.3 263.1C832.3 259.3 837.7 259.3 839.7 263.1C837.7 266.9 832.3 266.9 830.3 263.1Z" fill="#d0d0d0"/><circle cx="835" cy="263.1" r="1.9" fill="#5a5a5a"/><circle cx="835" cy="263.1" r="0.8" fill="#d0d0d0"/><path d="M830.3 278.4C832.3 274.6 837.7 274.6 839.7 278.4C837.7 282.2 832.3 282.2 830.3 278.4Z" fill="#d0d0d0"/><circle cx="835" cy="278.4" r="1.9" fill="#5a5a5a"/><circle cx="835" cy="278.4" r="0.8" fill="#d0d0d0"/>
 <rect x="984" y="230.5" width="4.5" height="4.5" fill="#4e7fff" stroke="#222" stroke-width="0.8"/>
 <rect x="984" y="276" width="5" height="5" fill="#4e7fff" stroke="#222" stroke-width="0.8"/>
 <path d="M990 225H995V230Z" fill="#e8e8e8"/>
 <!-- thumbnails -->
 <rect x="880.5" y="225.5" width="13" height="14.5" fill="#fff" stroke="#1e1e1e"/>
 <ellipse cx="887" cy="234.5" rx="5" ry="2.8" fill="#d00057"/>
 <ellipse cx="887" cy="232" rx="5" ry="2.8" fill="#00ffc8"/>
 <ellipse cx="887" cy="232" rx="3.6" ry="2" fill="#0b009c"/>
 <rect x="897.6" y="241.8" width="12.8" height="12.8" rx="1" fill="#fff" stroke="#1e1e1e" stroke-width="1.1"/>
 <ellipse cx="904" cy="248.2" rx="6" ry="2.4" fill="#0b009c"/>
 <rect x="897.6" y="257" width="12.8" height="12.8" rx="1" fill="#fff" stroke="#1e1e1e" stroke-width="1.1"/>
 <ellipse cx="904" cy="263.4" rx="6" ry="2.4" fill="#00ffc8"/>
 <rect x="897.6" y="272.2" width="12.8" height="12.8" rx="1" fill="#fff" stroke="#1e1e1e" stroke-width="1.1"/>
 <ellipse cx="904" cy="278.6" rx="6" ry="2.4" fill="#d00057"/>
</svg>
<div class="t" style="left:898px;top:228px;font-size:9.5px;color:#e0e0e0">图层</div><div class="t" style="left:921.5px;top:229px;font-size:10px;color:#e0e0e0">1</div>
<div class="t" style="left:920.5px;top:243.5px;font-size:9.5px;color:#d0d0d0">椭圆</div>
<div class="t" style="left:920.5px;top:258.5px;font-size:9.5px;color:#d0d0d0">椭圆</div>
<div class="t" style="left:920.5px;top:274px;font-size:9.5px;color:#d0d0d0">椭圆</div>
<svg style="left:0;top:0" width="1000" height="415"><g fill="none" stroke="#c4c4c4" stroke-width="0.9">
<path d="M918.5 244.5L915 248.3L918.5 252M941 244.5L944.5 248.3L941 252"/>
<path d="M918.5 259.5L915 263.3L918.5 267M941 259.5L944.5 263.3L941 267"/>
<path d="M918.5 275L915 278.8L918.5 282.5M941 275L944.5 278.8L941 282.5"/>
</g></svg>

<div class="a" style="left:824px;top:75px;width:1px;height:123px;background:#5a5a5a"></div>
<div class="a" style="left:824px;top:220px;width:1px;height:195px;background:#5a5a5a"></div>
<!-- green badge -->
<div class="a" style="left:986px;top:343.5px;width:35px;height:35px;border-radius:50%;background:linear-gradient(180deg,#5fd063,#3cb549);border:1.5px solid #dcdcdc"></div>
<div class="t" style="left:989.5px;top:356px;font-size:10.5px;font-style:italic;font-weight:bold;color:#fff;font-family:'Liberation Serif',serif">76</div>


</body></html>
